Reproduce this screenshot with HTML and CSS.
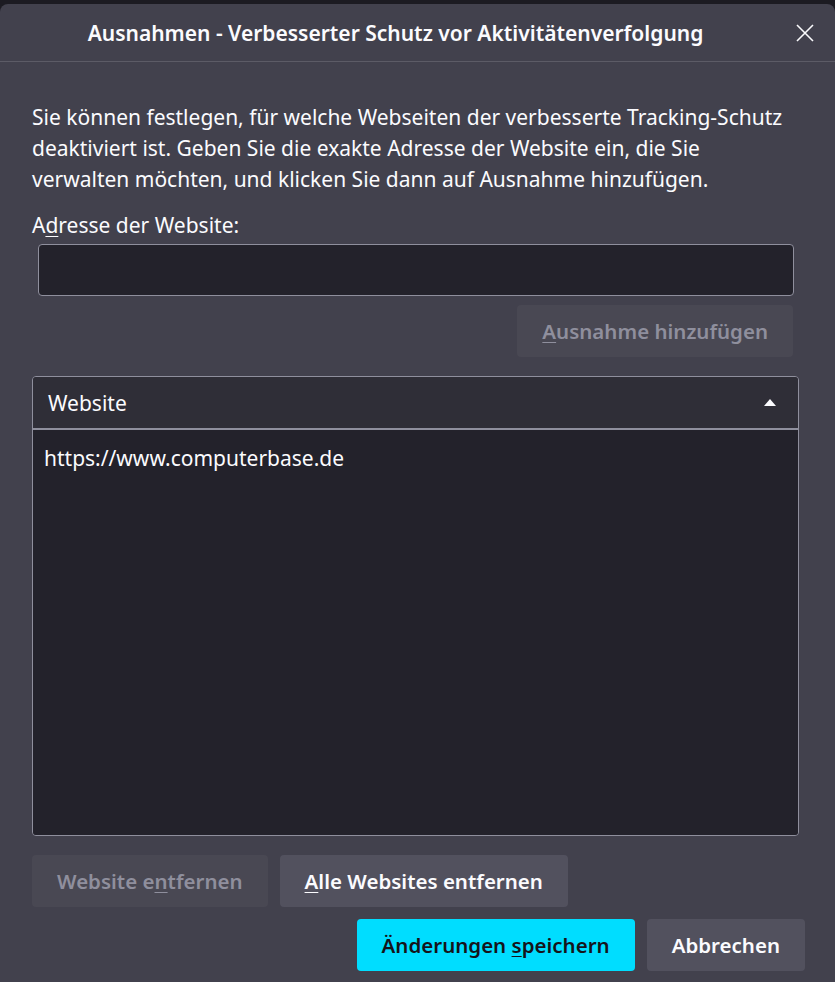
FILE: index.html
```html
<!DOCTYPE html>
<html lang="de">
<head>
    <meta charset="UTF-8">
    <title>Ausnahmen - Verbesserter Schutz vor Aktivitätenverfolgung</title>
    <link rel="stylesheet" href="styles.css">
</head>
<body>
    <div class="dialog">
        <div class="titlebar">
            <h1>Ausnahmen - Verbesserter Schutz vor Aktivitätenverfolgung</h1>
            <button class="close-btn" aria-label="Schließen">
                <svg width="20" height="20" viewBox="0 0 20 20"><path d="M2 2 L18 18 M18 2 L2 18" stroke="#fbfbfe" stroke-width="1.6" fill="none"/></svg>
            </button>
        </div>
        <div class="content">
            <p class="intro">Sie können festlegen, für welche Webseiten der verbesserte Tracking-Schutz deaktiviert ist. Geben Sie die exakte Adresse der Website ein, die Sie verwalten möchten, und klicken Sie dann auf Ausnahme hinzufügen.</p>
            <label for="url" class="field-label">A<u>d</u>resse der Website:</label>
            <input type="text" id="url" class="url-input">
            <div class="add-row">
                <button class="btn" disabled><u>A</u>usnahme hinzufügen</button>
            </div>
            <div class="tree">
                <div class="tree-head">
                    <span>Website</span>
                    <span class="sort-arrow"></span>
                </div>
                <div class="tree-body">
                    <div class="tree-row">https://www.computerbase.de</div>
                </div>
            </div>
            <div class="remove-row">
                <button class="btn" disabled>Website e<u>n</u>tfernen</button>
                <button class="btn"><u>A</u>lle Websites entfernen</button>
            </div>
            <div class="action-row">
                <button class="btn primary">Änderungen <u>s</u>peichern</button>
                <button class="btn">Abbrechen</button>
            </div>
        </div>
    </div>
</body>
</html>
```

FILE: styles.css
```css
html, body {
    margin: 0;
    padding: 0;
    background: #1c1b22;
}
body {
    font-family: "Noto Sans", "Open Sans", sans-serif;
    color: #fbfbfe;
    height: 982px;
    overflow: hidden;
}
.dialog {
    margin-top: 4px;
    height: 978px;
    background: #42414d;
    border-radius: 8px 8px 0 0;
}
.titlebar {
    height: 57px;
    border-bottom: 1px solid #5c5b66;
    display: flex;
    align-items: center;
    position: relative;
}
.titlebar h1 {
    flex: 1;
    margin: 0;
    padding-right: 44px;
    text-align: center;
    font-size: 21px;
    font-weight: 600;
}
.close-btn {
    position: absolute;
    right: 20px;
    top: 19px;
    background: none;
    border: none;
    padding: 0;
    width: 20px;
    height: 20px;
}
.content {
    padding: 0 30px 0 32px;
}
.intro {
    margin: 40px 12px 0 0;
    font-size: 21px;
    line-height: 31px;
}
.field-label {
    display: block;
    margin-top: 16px;
    font-size: 21px;
    line-height: 28px;
}
u {
    text-decoration-thickness: 1px;
    text-underline-offset: 3px;
}
.url-input {
    display: block;
    box-sizing: border-box;
    width: 756px;
    height: 52px;
    margin: 5px 0 0 6px;
    background: #23222b;
    border: 1px solid #8f8f9d;
    border-radius: 4px;
    color: #fbfbfe;
    font: inherit;
}
.add-row {
    display: flex;
    justify-content: flex-end;
    margin-top: 9px;
    padding-right: 12px;
}
.btn {
    height: 52px;
    padding: 0 25px;
    background: #52515e;
    color: #fbfbfe;
    border: none;
    border-radius: 4px;
    font-family: inherit;
    font-size: 20.5px;
    font-weight: 600;
}
.btn:disabled {
    background: #494853;
    color: #8f8f9d;
}
.btn.primary {
    background: #00ddff;
    color: #15141a;
}
.tree {
    margin-top: 19px;
    width: 767px;
    height: 460px;
    box-sizing: border-box;
    border: 1px solid #8f8f9d;
    border-radius: 4px;
    display: flex;
    flex-direction: column;
    overflow: hidden;
}
.tree-head {
    height: 51px;
    flex: none;
    background: #2f2e37;
    border-bottom: 2px solid #8f8f9d;
    display: flex;
    align-items: center;
    justify-content: space-between;
    padding: 0 22px 0 15px;
    font-size: 21px;
}
.sort-arrow {
    width: 0;
    height: 0;
    border-left: 6px solid transparent;
    border-right: 6px solid transparent;
    border-bottom: 7px solid #fbfbfe;
}
.tree-body {
    flex: 1;
    background: #23222b;
    padding-top: 14px;
}
.tree-row {
    padding-left: 11px;
    font-size: 21px;
    line-height: 29px;
}
.remove-row {
    display: flex;
    gap: 12px;
    margin-top: 19px;
}
.action-row {
    display: flex;
    justify-content: flex-end;
    gap: 12px;
    margin-top: 12px;
}
```
